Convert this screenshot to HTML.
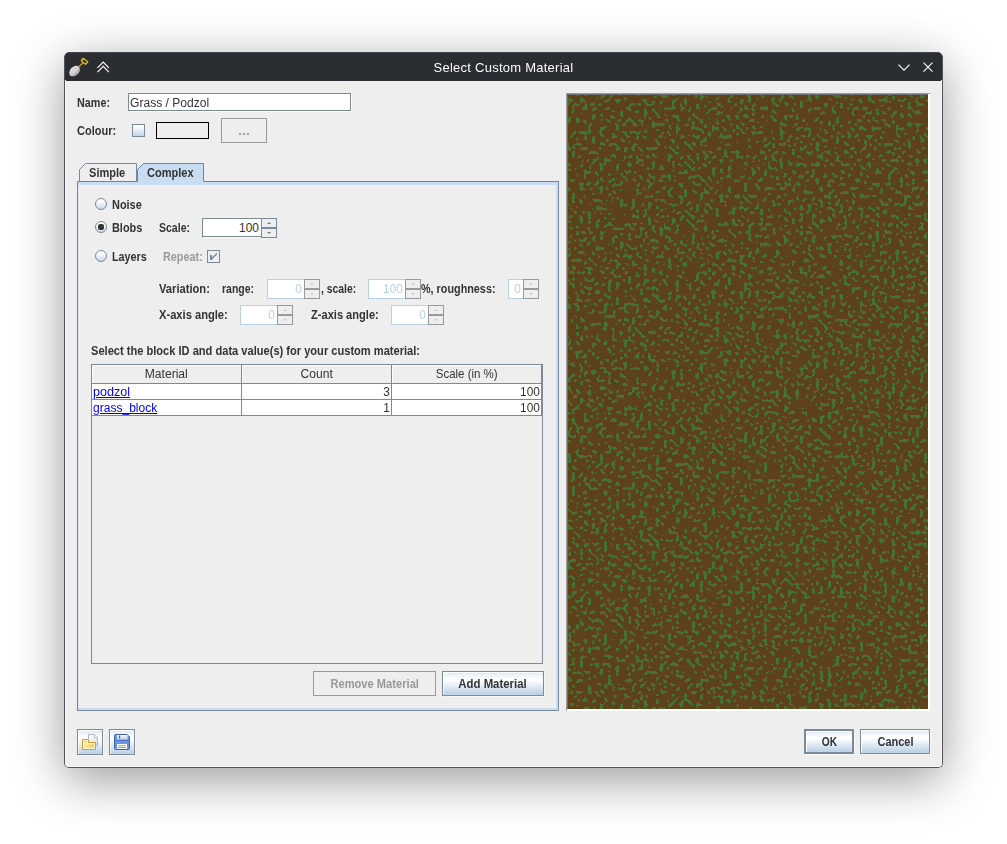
<!DOCTYPE html>
<html lang="en">
<head>
<meta charset="utf-8">
<title>Select Custom Material</title>
<style>
html,body{margin:0;padding:0;}
body{width:1007px;height:844px;background:#fff;overflow:hidden;position:relative;
  font-family:"Liberation Sans",sans-serif;font-size:12.5px;color:#333;}
*{box-sizing:border-box;}
.abs{position:absolute;}
#win{position:absolute;left:64px;top:52px;width:879px;height:716px;background:#eeeeee;
  border-radius:6px 6px 5px 5px;
  box-shadow:0 12px 50px rgba(0,0,0,0.40);
  overflow:hidden;}
#winborder{position:absolute;left:64px;top:52px;width:879px;height:716px;border:1px solid #505457;border-top:none;border-radius:6px 6px 5px 5px;pointer-events:none;}
#title{position:absolute;left:0;top:0;width:879px;height:29px;background:#2a2d32;color:#fcfcfc;box-shadow:inset 0 1px 0 #43474b;}
#title .t{position:absolute;left:0;width:879px;top:8px;will-change:transform;text-align:center;font-size:13px;line-height:16px;letter-spacing:0.25px;}
.lbl{position:absolute;transform-origin:0 50%;font-weight:bold;white-space:nowrap;line-height:14px;height:14px;color:#333;}
.dis{color:#999;}
.reg{font-weight:normal;}
.btn{position:absolute;border:1px solid #7a8a99;background:linear-gradient(#dde8f3 0%,#ffffff 30%,#ffffff 36%,#b8cfe5 100%);
  font-weight:bold;text-align:center;color:#333;white-space:nowrap;box-shadow:1px 1px 0 #f6f6f6;}
.btn:after{content:"";position:absolute;left:0;top:0;right:0;bottom:0;border:1px solid rgba(255,255,255,0.9);border-right-color:rgba(255,255,255,0.15);border-bottom-color:rgba(255,255,255,0.1);}
.btn.off{background:#eeeeee;border-color:#999999;color:#999;box-shadow:none;}
.btn.off:after{display:none;}
.field{position:absolute;background:#fff;border:1px solid #7a8a99;box-shadow:1px 1px 0 #fff;white-space:nowrap;}
.spin{position:absolute;}
.spin .f{position:absolute;left:0;top:0;bottom:0;background:#fff;border:1px solid #7a8a99;border-right:none;border-bottom-color:#fff;text-align:right;line-height:19px;}
.spin .f:before{content:"";position:absolute;left:0;right:0;bottom:0;height:1px;background:#7a8a99;}
.spin .b{position:absolute;right:0;width:16px;border:1px solid #7a8a99;background:#eeeeee;}
.spin .b.u{top:0;height:10px;}
.spin .b.d{bottom:0;height:10px;}
.spin .b i{position:absolute;left:5px;width:0;height:0;border-left:2px solid transparent;border-right:2px solid transparent;}
.spin .b.u i{top:3px;border-bottom:2px solid #6b7c8e;}
.spin .b.d i{top:3px;border-top:2px solid #6b7c8e;}
.spin.off .f{border-color:#b8cfe5;color:#b8cfe5;}
.spin.off .f:before{display:none;}
.spin.off .b{border-color:#999;background:#eeeeee;}
.spin.off .b i{border-bottom-color:#b8cfe5;border-top-color:#b8cfe5;}
.radio{position:absolute;width:12px;height:12px;border-radius:50%;border:1px solid #7a8a99;background:linear-gradient(#ffffff 20%,#c8d8e8 100%);}
.radio.on:after{content:"";position:absolute;left:2px;top:2px;width:6px;height:6px;border-radius:35%;background:#333;}

.th{height:19px;border-right:1px solid #7a8a99;border-bottom:1px solid #7a8a99;text-align:center;line-height:19px;background:#eeeeee;box-shadow:inset 1px 1px 0 #fff;}
.td{height:16px;width:150px;background:#fff;border-right:1px solid #7a8a99;border-bottom:1px solid #7a8a99;line-height:17px;padding:0 1px;}
.td.r{text-align:right;}
.lnk{color:#0000f4;}
.bt{display:inline-block;}
.sx{display:inline-block;white-space:nowrap;}
</style>
</head>
<body>
<div id="win">
  <div id="title">
    <div class="t">Select Custom Material</div>
  </div>
</div>
<div id="winborder"><div style="position:absolute;left:0;top:28px;right:0;bottom:0;border:1px solid #f7f7f7;border-top:none;border-radius:0 0 4px 4px;"></div></div>
<div id="c" class="abs" style="left:0;top:0;width:1007px;height:844px;">
  <svg class="abs" style="left:0;top:52px;" width="1007" height="30" viewBox="0 52 1007 30">
    <defs><linearGradient id="bl" x1="0" y1="0" x2="1" y2="1"><stop offset="0" stop-color="#f4f4f4"/><stop offset="0.55" stop-color="#c9c9c9"/><stop offset="1" stop-color="#8d8d8d"/></linearGradient></defs>
    <!-- shovel -->
    <path d="M78.6 67.0 L83.4 62.6" stroke="#d4a900" stroke-width="1.3" fill="none"/>
    <path d="M82.9 58.3 L87.8 61.8 L85.5 64.4 L81.3 60.8 Z" stroke="#e6c012" stroke-width="1.25" fill="none" stroke-linejoin="round"/>
    <path d="M77.3 66.3 L79.4 68.2 L77.6 70.2 L75.6 68.2 Z" fill="#e4e4e4"/>
    <path d="M74.4 66.2 C76.6 65.2 78.6 65.8 79.4 67.4 C80.4 69.2 80.0 72.0 77.9 74.0 C75.6 76.2 72.0 77.0 70.3 75.7 C68.7 74.3 69.2 71.0 70.8 68.8 C71.8 67.4 73.0 66.8 74.4 66.2 Z" fill="url(#bl)"/>
    <path d="M77.2 68.6 L73.2 72.8" stroke="#f6f6f6" stroke-width="0.9" fill="none" opacity="0.8"/>
    <!-- keep above -->
    <path d="M97.5 67.8 L103.2 62.1 L108.9 67.8 M97.5 72.1 L103.2 66.4 L108.9 72.1" stroke="#fcfcfc" stroke-width="1.15" fill="none"/>
    <!-- minimize -->
    <path d="M898.5 64.6 L904 70.1 L909.5 64.6" stroke="#fcfcfc" stroke-width="1.15" fill="none"/>
    <!-- close -->
    <path d="M923.5 62.6 L932.5 71.6 M932.5 62.6 L923.5 71.6" stroke="#fcfcfc" stroke-width="1.15" fill="none"/>
  </svg>
  <!-- name row -->
  <div class="lbl" style="left:77px;top:96px;transform:scaleX(0.863);">Name:</div>
  <div class="field" style="left:128px;top:93px;width:223px;height:18px;"><span class="abs reg sx" style="left:1px;top:2px;line-height:14px;transform-origin:0 50%;transform:scaleX(0.966);">Grass / Podzol</span></div>
  <div class="lbl" style="left:77px;top:124px;transform:scaleX(0.882);">Colour:</div>
  <div class="abs" style="left:132px;top:124px;width:13px;height:13px;border:1px solid #7a8a99;background:linear-gradient(#ffffff 10%,#c3d5e8 100%);"></div>
  <div class="abs" style="left:156px;top:122px;width:53px;height:17px;border:1px solid #000;background:#eeeeee;"></div>
  <div class="btn off" style="left:221px;top:118px;width:46px;height:25px;line-height:25px;letter-spacing:0.6px;text-indent:0.6px;">...</div>

  <!-- tabs -->
  <svg class="abs" style="left:76px;top:160px;" width="486" height="554" viewBox="76 160 486 554">
    <!-- panel border -->
    <rect x="78" y="182" width="480" height="528" fill="#eeeeee"/>
    <rect x="78" y="182" width="480" height="3" fill="#c8ddf2"/>
    <rect x="556" y="182" width="2" height="528" fill="#c8ddf2"/>
    <rect x="78" y="708" width="480" height="2" fill="#c8ddf2"/>
    <path d="M558.5 182 V710.5 H78" fill="none" stroke="#7a8a99" stroke-width="1"/>
    <path d="M77.5 711 V181.5 H559" fill="none" stroke="#6382bf" stroke-width="1"/>
    <rect x="78" y="185" width="1" height="523" fill="#dfe9f4"/>
    <!-- simple tab -->
    <path d="M79.5 181 V169.5 L85.5 163.5 H136.5 V181" fill="#eeeeee" stroke="#7a8a99" stroke-width="1"/>
    <!-- complex tab -->
    <path d="M137.5 182 V169.5 L143.5 163.5 H203.5 V182 Z" fill="#c8ddf2" stroke="none"/>
    <path d="M137.5 181.5 V169.5 L143.5 163.5 H203.5 V181.5" fill="none" stroke="#6382bf" stroke-width="1"/>
    <rect x="138" y="181" width="65" height="2" fill="#c8ddf2"/>
  </svg>
  <div class="lbl" style="left:89px;top:166px;transform:scaleX(0.885);">Simple</div>
  <div class="lbl" style="left:147px;top:166px;transform:scaleX(0.883);">Complex</div>

  <!-- radios -->
  <div class="radio" style="left:95px;top:198px;"></div>
  <div class="lbl" style="left:112px;top:198px;transform:scaleX(0.875);">Noise</div>
  <div class="radio on" style="left:95px;top:221px;"></div>
  <div class="lbl" style="left:112px;top:221px;transform:scaleX(0.872);">Blobs</div>
  <div class="lbl" style="left:159px;top:221px;transform:scaleX(0.841);">Scale:</div>
  <div class="spin" style="left:202px;top:218px;width:75px;height:20px;"><div class="f" style="width:60px;padding-right:3px;"><span class="sx" style="transform-origin:100% 50%;transform:scaleX(0.949);">100</span></div><div class="b u"><i></i></div><div class="b d"><i></i></div></div>
  <div class="radio" style="left:95px;top:250px;"></div>
  <div class="lbl" style="left:112px;top:250px;transform:scaleX(0.863);">Layers</div>
  <div class="lbl dis" style="left:163px;top:250px;transform:scaleX(0.868);">Repeat:</div>
  <div class="abs" style="left:207px;top:250px;width:13px;height:13px;border:1px solid #7a8a99;background:#eeeeee;"><svg class="abs" style="left:-1px;top:-1px" width="13" height="13" viewBox="0 0 13 13"><path d="M3 5 H5 V7.5 L9.5 3 H10 V4.5 L5 9.5 V10 H3 Z" fill="#76879a"/></svg></div>

  <div class="lbl" style="left:159px;top:282px;transform:scaleX(0.893);">Variation:</div>
  <div class="lbl" style="left:222px;top:282px;transform:scaleX(0.838);">range:</div>
  <div class="spin off" style="left:267px;top:279px;width:53px;height:20px;"><div class="f" style="width:38px;padding-right:3px;"><span class="sx" style="transform-origin:100% 50%;transform:scaleX(0.949);">0</span></div><div class="b u"><i></i></div><div class="b d"><i></i></div></div>
  <div class="lbl" style="left:321px;top:282px;transform:scaleX(0.830);">, scale:</div>
  <div class="spin off" style="left:368px;top:279px;width:53px;height:20px;"><div class="f" style="width:38px;padding-right:3px;"><span class="sx" style="transform-origin:100% 50%;transform:scaleX(0.949);">100</span></div><div class="b u"><i></i></div><div class="b d"><i></i></div></div>
  <div class="lbl" style="left:421px;top:282px;transform:scaleX(0.865);">%, roughness:</div>
  <div class="spin off" style="left:508px;top:279px;width:31px;height:20px;"><div class="f" style="width:16px;padding-right:3px;"><span class="sx" style="transform-origin:100% 50%;transform:scaleX(0.949);">0</span></div><div class="b u"><i></i></div><div class="b d"><i></i></div></div>

  <div class="lbl" style="left:159px;top:308px;transform:scaleX(0.892);">X-axis angle:</div>
  <div class="spin off" style="left:240px;top:305px;width:53px;height:20px;"><div class="f" style="width:38px;padding-right:3px;"><span class="sx" style="transform-origin:100% 50%;transform:scaleX(0.949);">0</span></div><div class="b u"><i></i></div><div class="b d"><i></i></div></div>
  <div class="lbl" style="left:311px;top:308px;transform:scaleX(0.887);">Z-axis angle:</div>
  <div class="spin off" style="left:391px;top:305px;width:53px;height:20px;"><div class="f" style="width:38px;padding-right:3px;"><span class="sx" style="transform-origin:100% 50%;transform:scaleX(0.949);">0</span></div><div class="b u"><i></i></div><div class="b d"><i></i></div></div>

  <div class="lbl" style="left:91px;top:344px;transform:scaleX(0.887);">Select the block ID and data value(s) for your custom material:</div>

  <!-- table -->
  <div class="abs" id="tbl" style="left:91px;top:364px;width:452px;height:300px;border:1px solid #7a8a99;background:#eeeeee;">
    <div class="abs th" style="left:0;top:0;width:150px;"><span class="sx" style="transform-origin:50% 50%;transform:scaleX(0.971);">Material</span></div>
    <div class="abs th" style="left:150px;top:0;width:150px;"><span class="sx" style="transform-origin:50% 50%;transform:scaleX(0.968);">Count</span></div>
    <div class="abs th" style="left:300px;top:0;width:150px;"><span class="sx" style="transform-origin:50% 50%;transform:scaleX(0.919);">Scale (in %)</span></div>
    <div class="abs td lnk" style="left:0;top:19px;"><span class="sx" style="transform-origin:0 50%;transform:scaleX(1.004);"><u>podzol</u></span></div>
    <div class="abs td r" style="left:150px;top:19px;"><span class="sx" style="transform-origin:100% 50%;transform:scaleX(0.949);">3</span></div>
    <div class="abs td r" style="left:300px;top:19px;"><span class="sx" style="transform-origin:100% 50%;transform:scaleX(0.949);">100</span></div>
    <div class="abs td lnk" style="left:0;top:35px;"><span class="sx" style="transform-origin:0 50%;transform:scaleX(0.964);"><u>grass_block</u></span></div>
    <div class="abs td r" style="left:150px;top:35px;"><span class="sx" style="transform-origin:100% 50%;transform:scaleX(0.949);">1</span></div>
    <div class="abs td r" style="left:300px;top:35px;"><span class="sx" style="transform-origin:100% 50%;transform:scaleX(0.949);">100</span></div>
  </div>

  <div class="btn off" style="left:313px;top:671px;width:123px;height:25px;line-height:25px;"><span class="bt" style="transform:scaleX(0.891);">Remove Material</span></div>
  <div class="btn" style="left:442px;top:671px;width:102px;height:25px;line-height:25px;"><span class="bt" style="transform:scaleX(0.912);">Add Material</span></div>

  <!-- preview -->
  <div class="abs" style="left:566px;top:93px;width:364px;height:618px;background:#fff;border-top:1px solid #9a9a9a;border-left:1px solid #9a9a9a;"></div>
  <div class="abs" style="left:567px;top:94px;width:361px;height:615px;background:#6a6a6a;"></div>
  <svg class="abs" style="left:568px;top:95px;" width="360" height="614" viewBox="0 0 360 614">
    <filter id="nz" x="0" y="0" width="360" height="614" filterUnits="userSpaceOnUse" color-interpolation-filters="sRGB">
      <feTurbulence type="fractalNoise" baseFrequency="0.25" numOctaves="1" seed="3" result="t"/>
      <feColorMatrix in="t" type="matrix" values="0 0 0 0 0.275  0 0 0 0 0.439  0 0 0 0 0.204  1 0 0 0 0"/>
      <feComponentTransfer><feFuncA type="linear" slope="400" intercept="-234"/></feComponentTransfer>
    </filter>
    <rect width="360" height="614" fill="#5c411a"/>
    <rect width="360" height="614" filter="url(#nz)"/>
  </svg>

  <!-- bottom buttons -->
  <div class="btn" style="left:77px;top:729px;width:26px;height:26px;"><svg class="abs" style="left:4px;top:4px;z-index:2" width="16" height="16" viewBox="0 0 16 16">
    <defs><linearGradient id="fg" x1="0" y1="0" x2="1" y2="1"><stop offset="0" stop-color="#fffdf0"/><stop offset="0.45" stop-color="#fbe99a"/><stop offset="1" stop-color="#f4cb2c"/></linearGradient>
    <linearGradient id="pg" x1="0" y1="0" x2="1" y2="1"><stop offset="0" stop-color="#ffffff"/><stop offset="1" stop-color="#dadada"/></linearGradient></defs>
    <path d="M6.5 0.5 H12.5 L15.5 3.5 V11.5 H6.5 Z" fill="url(#pg)" stroke="#b9b9b9" stroke-width="1"/>
    <path d="M12.5 0.5 V3.5 H15.5" fill="#f4f4f4" stroke="#c4c4c4" stroke-width="1"/>
    <path d="M0.5 15.5 V5.5 H6.5 V8.5 H13.5 V15.5 Z" fill="url(#fg)" stroke="#de982e" stroke-width="1"/>
    <path d="M1.5 14.5 V6.5 H5.5 V9.5 H12.5 V14.5 Z" fill="none" stroke="#fffbe6" stroke-width="1" opacity="0.9"/>
    <path d="M2.5 7.5 H5" stroke="#f3d06a" stroke-width="1.6" fill="none"/>
    <path d="M6.5 11.5 H12" stroke="#f2c94e" stroke-width="1" fill="none"/>
  </svg></div>
  <div class="btn" style="left:109px;top:729px;width:26px;height:26px;"><svg class="abs" style="left:4px;top:4px;z-index:2" width="16" height="16" viewBox="0 0 16 16">
    <defs><linearGradient id="sg" x1="0" y1="0" x2="0" y2="1"><stop offset="0" stop-color="#ffffff"/><stop offset="1" stop-color="#b9cdf0"/></linearGradient></defs>
    <path d="M1.5 0.5 H13 L15.5 3 V14.5 Q15.5 15.5 14.5 15.5 H1.5 Q0.5 15.5 0.5 14.5 V1.5 Q0.5 0.5 1.5 0.5 Z" fill="#6b95dd" stroke="#3b61b3" stroke-width="1"/>
    <rect x="3" y="1" width="10.5" height="4.6" fill="url(#sg)"/>
    <rect x="5" y="1.5" width="1.2" height="3" fill="#3b61b3"/>
    <path d="M1.5 6.5 H14.5" stroke="#4a74c6" stroke-width="1"/>
    <rect x="3" y="10" width="10" height="5" fill="#ffffff"/>
    <rect x="4" y="11.2" width="8" height="1" fill="#7cc04e"/>
    <rect x="4" y="13" width="8" height="1" fill="#7cc04e"/>
  </svg></div>
  <div class="btn" style="left:804px;top:729px;width:50px;height:25px;border:2px solid #7a8a99;line-height:23px;"><span class="bt" style="transform:scaleX(0.816);">OK</span></div>
  <div class="btn" style="left:860px;top:729px;width:70px;height:25px;line-height:25px;"><span class="bt" style="transform:scaleX(0.880);">Cancel</span></div>
</div>

</body>
</html>
